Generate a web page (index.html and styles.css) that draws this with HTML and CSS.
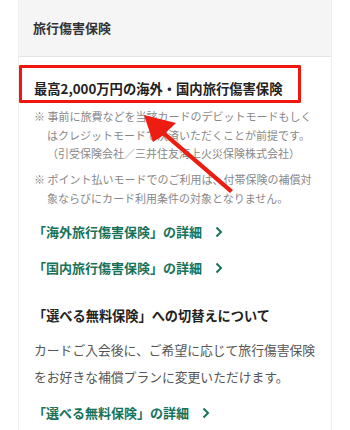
FILE: index.html
```html
<!DOCTYPE html>
<html lang="ja">
<head>
  <meta charset="utf-8">
  <meta name="viewport" content="width=device-width, initial-scale=1.0">
  <title>旅行傷害保険</title>
  <link rel="stylesheet" href="styles.css">
</head>
<body>
  <div class="card">
    <div class="card-head">旅行傷害保険</div>

    <div class="card-body">
      <h3 class="title">最高2,000万円の海外・国内旅行傷害保険</h3>

      <p class="note">※ 事前に旅費などを当該カードのデビットモードもしく<br>はクレジットモードで決済いただくことが前提です。<br>（引受保険会社／三井住友海上火災保険株式会社）</p>
      <p class="note note-second">※ ポイント払いモードでのご利用は、付帯保険の補償対<br>象ならびにカード利用条件の対象となりません。</p>

      <a class="more" href="#">「海外旅行傷害保険」の詳細
        <svg class="chev" viewBox="0 0 8 12" width="8" height="12"><path d="M1.5 1.5 L6 6 L1.5 10.5" /></svg>
      </a>
      <a class="more" href="#">「国内旅行傷害保険」の詳細
        <svg class="chev" viewBox="0 0 8 12" width="8" height="12"><path d="M1.5 1.5 L6 6 L1.5 10.5" /></svg>
      </a>

      <h3 class="sub-title">「選べる無料保険」への切替えについて</h3>
      <p class="text">カードご入会後に、ご希望に応じて旅行傷害保険<br>をお好きな補償プランに変更いただけます。</p>

      <a class="more more-last" href="#">「選べる無料保険」の詳細
        <svg class="chev" viewBox="0 0 8 12" width="8" height="12"><path d="M1.5 1.5 L6 6 L1.5 10.5" /></svg>
      </a>
    </div>
  </div>

  <!-- annotation marks -->
  <div class="mark-box"></div>
  <svg class="mark-arrow" viewBox="0 0 350 430" width="350" height="430">
    <polygon points="144,115 176,123 166,132.5 233,190 230,193 163,135.5 153,142" />
  </svg>
</body>
</html>
```

FILE: styles.css
```css
body {
  margin: 0;
  font-family: "Noto Sans CJK JP", "Noto Sans", sans-serif;
  background: #fff;
  color: #333;
}

.card {
  width: 312px;
  margin-left: 18px;
  min-height: 430px;
  border-left: 1px solid #eeeeee;
  border-right: 1px solid #eeeeee;
}

.card-head {
  height: 56px;
  line-height: 56px;
  padding-left: 14px;
  background: #f5f5f5;
  border-bottom: 1px solid #e4e4e4;
  font-size: 13px;
  font-weight: 700;
  color: #333;
}

.card-body {
  padding: 0 15px;
}

.title {
  margin: 0;
  padding-top: 22px;
  font-size: 13.3px;
  line-height: 20px;
  font-weight: 700;
  color: #222;
}

.note {
  margin: 8px 0 0 0;
  padding-left: 13px;
  text-indent: -13px;
  font-size: 11px;
  line-height: 18.5px;
  color: #888;
}

.note-second {
  margin-top: 7.5px;
}

.more {
  display: flex;
  align-items: center;
  gap: 13px;
  margin-top: 15px;
  margin-left: -1px;
  font-size: 13px;
  line-height: 20px;
  font-weight: 700;
  color: #16735a;
  text-decoration: none;
}

.more + .more {
  margin-top: 16px;
}

.chev {
  fill: none;
  stroke: #16735a;
  stroke-width: 2;
}

.sub-title {
  margin: 28px 0 0 -1px;
  font-size: 13.2px;
  line-height: 20px;
  font-weight: 700;
  color: #222;
}

.text {
  margin: 9.5px 0 0 0;
  font-size: 12.8px;
  line-height: 27px;
  color: #555;
}

.more-last {
  margin-top: 13.5px;
}

.mark-box {
  position: absolute;
  left: 19px;
  top: 65px;
  width: 276px;
  height: 32px;
  border: 3px solid #f0180e;
  border-radius: 1px;
}

.mark-arrow {
  position: absolute;
  left: 0;
  top: 0;
  fill: #ee1d12;
}
```
